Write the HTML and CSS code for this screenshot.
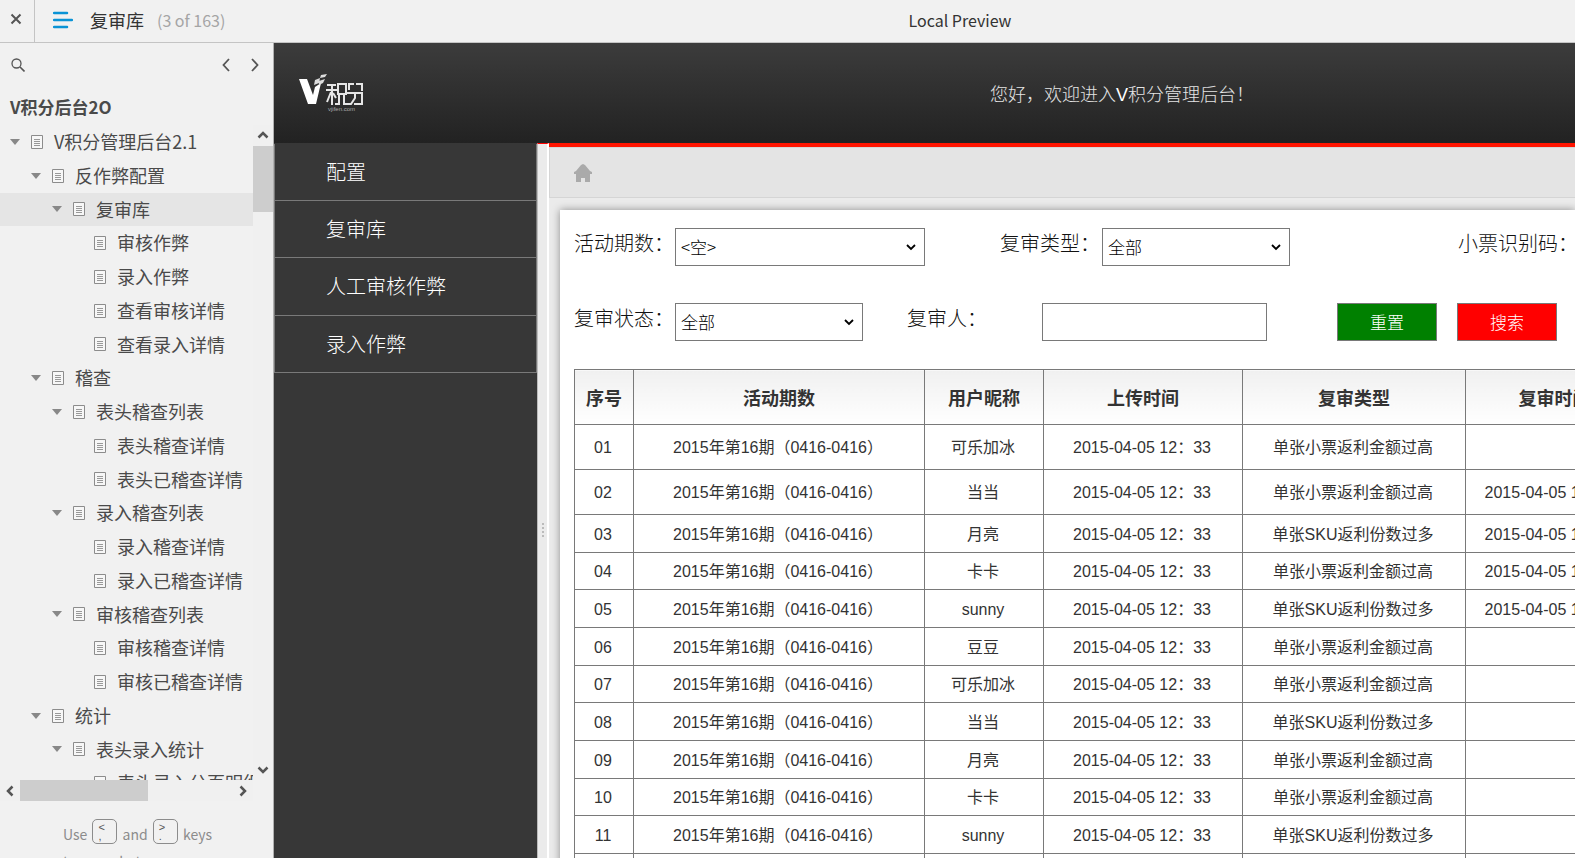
FILE: index.html
```
<!DOCTYPE html>
<html lang="zh-CN">
<head>
  <meta charset="utf-8">
  <title>复审库</title>
  <link rel="stylesheet" href="styles.css">
</head>
<body>

<svg class="symbols" aria-hidden="true">
  <symbol id="page" viewBox="0 0 12 14">
    <path d="M.5.5h11v13H.5z" fill="#f7f7f7" stroke="#8c8c8c"/>
    <path d="M3 4.500h6M3 6.500h6M3 8.500h6M3 10.500h6" stroke="#999"/>
  </symbol>
  <symbol id="chevron" viewBox="0 0 12 12">
    <path d="M1.500 8.500L6 4l4.500 4.500" fill="none" stroke="#555" stroke-width="2.500"/>
  </symbol>
</svg>

<header class="topbar">
  <button class="close" aria-label="close">
    <svg width="12" height="12" viewBox="0 0 12 12"><path d="M1.500 1.500l9 9M10.500 1.500l-9 9" stroke="#555" stroke-width="2"/></svg>
  </button>
  <svg class="menu" width="20" height="18" viewBox="0 0 20 18"><path d="M1 2h13M1 9h18M1 16h13" stroke="#0a93d5" stroke-width="2.500" stroke-linecap="round"/></svg>
  <span class="page-name">复审库</span>
  <span class="page-count">(3 of 163)</span>
  <span class="preview">Local Preview</span>
</header>

<div class="main">
  <aside class="sitemap">
    <div class="tools">
      <button aria-label="search"><svg width="14" height="14" viewBox="0 0 14 14"><circle cx="5.500" cy="5.500" r="4.500" fill="none" stroke="#555" stroke-width="1.300"/><path d="M9 9l4.500 4.500" stroke="#555" stroke-width="1.600"/></svg></button>
      <button class="prev" aria-label="previous"><svg width="8" height="14" viewBox="0 0 8 14"><path d="M7 1L1.500 7 7 13" fill="none" stroke="#555" stroke-width="1.800"/></svg></button>
      <button aria-label="next"><svg width="8" height="14" viewBox="0 0 8 14"><path d="M1 1l5.500 6L1 13" fill="none" stroke="#555" stroke-width="1.800"/></svg></button>
    </div>
    <h1>V积分后台2O</h1>

    <div class="tree-area">
      <ul class="tree">
        <li class="l1 open"><svg><use href="#page"/></svg><a href="#">V积分管理后台2.1</a></li>
        <li class="l2 open"><svg><use href="#page"/></svg><a href="#">反作弊配置</a></li>
        <li class="l3 open current"><svg><use href="#page"/></svg><a href="#">复审库</a></li>
        <li class="l4"><svg><use href="#page"/></svg><a href="#">审核作弊</a></li>
        <li class="l4"><svg><use href="#page"/></svg><a href="#">录入作弊</a></li>
        <li class="l4"><svg><use href="#page"/></svg><a href="#">查看审核详情</a></li>
        <li class="l4"><svg><use href="#page"/></svg><a href="#">查看录入详情</a></li>
        <li class="l2 open"><svg><use href="#page"/></svg><a href="#">稽查</a></li>
        <li class="l3 open"><svg><use href="#page"/></svg><a href="#">表头稽查列表</a></li>
        <li class="l4"><svg><use href="#page"/></svg><a href="#">表头稽查详情</a></li>
        <li class="l4"><svg><use href="#page"/></svg><a href="#">表头已稽查详情</a></li>
        <li class="l3 open"><svg><use href="#page"/></svg><a href="#">录入稽查列表</a></li>
        <li class="l4"><svg><use href="#page"/></svg><a href="#">录入稽查详情</a></li>
        <li class="l4"><svg><use href="#page"/></svg><a href="#">录入已稽查详情</a></li>
        <li class="l3 open"><svg><use href="#page"/></svg><a href="#">审核稽查列表</a></li>
        <li class="l4"><svg><use href="#page"/></svg><a href="#">审核稽查详情</a></li>
        <li class="l4"><svg><use href="#page"/></svg><a href="#">审核已稽查详情</a></li>
        <li class="l2 open"><svg><use href="#page"/></svg><a href="#">统计</a></li>
        <li class="l3 open"><svg><use href="#page"/></svg><a href="#">表头录入统计</a></li>
        <li class="l4"><svg><use href="#page"/></svg><a href="#">表头录入分页明细</a></li>
      </ul>
      <div class="vbar">
        <svg><use href="#chevron"/></svg>
        <div class="thumb"></div>
        <svg class="down"><use href="#chevron"/></svg>
      </div>
      <div class="hbar">
        <svg class="left"><use href="#chevron"/></svg>
        <div class="thumb"></div>
        <svg class="right"><use href="#chevron"/></svg>
      </div>
    </div>

    <div class="hint">
      Use <kbd><span>&lt;</span><span>,</span></kbd> and <kbd><span>&gt;</span><span>.</span></kbd> keys<br>to move between pages
    </div>
  </aside>

  <section class="site">
    <div class="site-header">
      <svg class="logo" width="66" height="40" viewBox="0 0 66 40">
        <path d="M0 6h8l6 16 2-8 6-4-5 21h-8z" fill="#fff"/>
        <path d="M16 7l5-2-1 5-5 2zM22 2l6-1-2 3-5 1zM20 8l6-2-2 4-4 2z" fill="#ddd"/>
        <g fill="none" stroke="#e6e6e6" stroke-width="2">
          <path d="M28 12h9M33 12v20M27 17h11M32 19l-4 10M34 20l3 5M39 11h8v10h-8zM40 22v9h-4M45 22v9h4"/>
          <path d="M50 17v-6h5M57 11h6v7M48 20h15v11h-8M56 20v5l-4 6h-4"/>
        </g>
        <text x="29" y="38" class="logo-url">vjifen.com</text>
      </svg>
      <p class="welcome">您好，欢迎进入<b>V</b>积分管理后台！</p>
    </div>

    <div class="site-body">
      <nav class="nav">
        <a href="#">配置</a>
        <a href="#">复审库</a>
        <a href="#">人工审核作弊</a>
        <a href="#">录入作弊</a>
      </nav>
      <div class="splitter"><i></i><i></i><i></i><i></i></div>

      <div class="content">
        <div class="crumb">
          <svg width="18" height="18" viewBox="0 0 18 18"><path d="M9 0l2 1 5 6 2 1v2h-2v8h-5v-4H7v4H2v-8H0V8l2-1 5-6z" fill="#aaa"/></svg>
        </div>
        <div class="card">
          <form class="filters">
            <div class="row">
              <label class="w100" for="period">活动期数：</label>
              <select id="period" class="wide"><option>&lt;空&gt;</option></select>
              <label class="type" for="type">复审类型：</label>
              <select id="type"><option>全部</option></select>
              <label class="code" for="code">小票识别码：</label>
              <input id="code" type="text">
            </div>
            <div class="row">
              <label class="w100" for="state">复审状态：</label>
              <select id="state"><option>全部</option></select>
              <label class="person" for="person">复审人：</label>
              <input id="person" type="text">
              <button type="button" class="reset">重置</button>
              <button type="button" class="search">搜索</button>
            </div>
          </form>

          <table>
            <colgroup>
              <col class="c-no"><col class="c-period"><col class="c-user"><col class="c-upload"><col class="c-type"><col class="c-time">
            </colgroup>
            <thead>
              <tr><th>序号</th><th>活动期数</th><th>用户昵称</th><th>上传时间</th><th>复审类型</th><th>复审时间</th></tr>
            </thead>
            <tbody>
              <tr class="tall"><td>01</td><td>2015年第16期（0416-0416）</td><td>可乐加冰</td><td>2015-04-05 12：33</td><td>单张小票返利金额过高</td><td></td></tr>
              <tr class="tall"><td>02</td><td>2015年第16期（0416-0416）</td><td>当当</td><td>2015-04-05 12：33</td><td>单张小票返利金额过高</td><td>2015-04-05 12：33</td></tr>
              <tr><td>03</td><td>2015年第16期（0416-0416）</td><td>月亮</td><td>2015-04-05 12：33</td><td>单张SKU返利份数过多</td><td>2015-04-05 12：33</td></tr>
              <tr><td>04</td><td>2015年第16期（0416-0416）</td><td>卡卡</td><td>2015-04-05 12：33</td><td>单张小票返利金额过高</td><td>2015-04-05 12：33</td></tr>
              <tr><td>05</td><td>2015年第16期（0416-0416）</td><td>sunny</td><td>2015-04-05 12：33</td><td>单张SKU返利份数过多</td><td>2015-04-05 12：33</td></tr>
              <tr><td>06</td><td>2015年第16期（0416-0416）</td><td>豆豆</td><td>2015-04-05 12：33</td><td>单张小票返利金额过高</td><td></td></tr>
              <tr><td>07</td><td>2015年第16期（0416-0416）</td><td>可乐加冰</td><td>2015-04-05 12：33</td><td>单张小票返利金额过高</td><td></td></tr>
              <tr><td>08</td><td>2015年第16期（0416-0416）</td><td>当当</td><td>2015-04-05 12：33</td><td>单张SKU返利份数过多</td><td></td></tr>
              <tr><td>09</td><td>2015年第16期（0416-0416）</td><td>月亮</td><td>2015-04-05 12：33</td><td>单张小票返利金额过高</td><td></td></tr>
              <tr><td>10</td><td>2015年第16期（0416-0416）</td><td>卡卡</td><td>2015-04-05 12：33</td><td>单张小票返利金额过高</td><td></td></tr>
              <tr><td>11</td><td>2015年第16期（0416-0416）</td><td>sunny</td><td>2015-04-05 12：33</td><td>单张SKU返利份数过多</td><td></td></tr>
              <tr><td></td><td></td><td></td><td></td><td></td><td></td></tr>
            </tbody>
          </table>
        </div>
      </div>
    </div>
  </section>
</div>

</body>
</html>
```
FILE: styles.css
```
* {
    box-sizing: border-box;
}

body {
    margin: 0;
    height: 100vh;
    display: flex;
    flex-direction: column;
    overflow: hidden;
    background: #f1f1f1;
    font-family: "Noto Sans CJK SC", sans-serif;
    color: #333;
}

a {
    color: inherit;
    text-decoration: none;
}

button {
    padding: 0;
    border: 0;
    background: none;
}

.symbols {
    display: none;
}

/* top bar */
.topbar {
    position: relative;
    flex: none;
    display: flex;
    align-items: center;
    height: 43px;
    padding-bottom: 2px;
    border-bottom: 1px solid #c4c4c4;
    font-size: 18px;
    line-height: 40px;
}

.close {
    width: 35px;
    height: 42px;
    margin-bottom: -2px;
    border-right: 1px solid #c4c4c4;
}

.close svg {
    display: block;
    margin: -4px auto 0 10px;
}

.menu {
    margin: -1px 17px 0 18px;
}

.page-count {
    margin-left: 13px;
    font-size: 16px;
    color: #a5a5a5;
}

.preview {
    position: absolute;
    left: 345px;
    right: 0;
    text-align: center;
    font-size: 16px;
}

.main {
    flex: 1;
    display: flex;
    min-height: 0;
}

/* page tree */
.sitemap {
    flex: none;
    width: 274px;
    display: flex;
    flex-direction: column;
    border-right: 1px solid #b0b0b0;
    color: #4a4a4a;
}

.tools {
    display: flex;
    align-items: center;
    gap: 21px;
    height: 44px;
    padding: 0 14px 0 11px;
}

.tools svg {
    display: block;
}

.prev {
    margin-left: auto;
}

.sitemap h1 {
    margin: 0;
    padding: 5px 10px 0;
    height: 38px;
    font-size: 17px;
    line-height: 30px;
}

.tree-area {
    flex: 1;
    min-height: 0;
    display: grid;
    grid-template: minmax(0, 1fr) 21px / 1fr 20px;
}

.tree {
    margin: 0;
    padding: 0;
    list-style: none;
    overflow: hidden;
    font-size: 18px;
    line-height: 1.875;
}

.tree li {
    display: flex;
    align-items: center;
    white-space: nowrap;
}

.tree svg {
    flex: none;
    width: 12px;
    height: 14px;
    margin-right: 11px;
}

.l1 { padding-left: 31px; }
.l2 { padding-left: 52px; }
.l3 { padding-left: 73px; }
.l4 { padding-left: 94px; }

.open::before {
    content: "";
    margin: 0 11px 0 -21px;
    border: 5px solid transparent;
    border-top: 6px solid #888;
    border-bottom: 0;
}

.current {
    background: #e5e5e5;
}

.vbar {
    display: flex;
    flex-direction: column;
    align-items: center;
    padding: 4px 0;
    background: #f0f0f0;
}

.vbar svg,
.hbar svg {
    flex: none;
    width: 12px;
    height: 12px;
}

.vbar .thumb {
    width: 20px;
    height: 66px;
    margin-top: 5px;
    background: #cdcdcd;
}

.vbar .down {
    margin-top: auto;
    transform: rotate(180deg);
}

.hbar {
    display: flex;
    align-items: center;
    padding: 0 4px;
    background: #f0f0f0;
}

.hbar .thumb {
    width: 128px;
    height: 21px;
    margin-left: 4px;
    background: #cdcdcd;
}

.hbar .left {
    transform: rotate(-90deg);
}

.hbar .right {
    margin-left: auto;
    transform: rotate(90deg);
}

.hint {
    height: 57px;
    padding: 18px 0 0 63px;
    overflow: hidden;
    white-space: nowrap;
    font-size: 14px;
    line-height: 27px;
    color: #8c8c8c;
}

kbd {
    display: inline-block;
    width: 25px;
    height: 25px;
    margin: 0 2px;
    padding: 3px 0 0 5px;
    overflow: hidden;
    border: 1px solid #8c8c8c;
    border-radius: 5px;
    vertical-align: -4px;
    font: 11px/9px "Liberation Sans", sans-serif;
    color: #555;
}

kbd span {
    display: block;
    height: 9px;
}

/* site inside the preview */
.site {
    flex: 1;
    min-width: 0;
    display: flex;
    flex-direction: column;
    background: #373737;
}

.site-header {
    flex: none;
    display: flex;
    align-items: center;
    height: 100px;
    padding-left: 25px;
    background: linear-gradient(#3c3c3c, #222);
}

.logo-url {
    font: 6px "Liberation Sans", sans-serif;
    fill: #aaa;
}

.welcome {
    margin: 0 0 0 625px;
    font-size: 18px;
    font-weight: 300;
    white-space: nowrap;
    color: #e4e4e4;
}

.welcome b {
    font-family: "Liberation Sans", sans-serif;
    font-weight: normal;
    color: #fff;
}

.site-body {
    flex: 1;
    display: flex;
    min-height: 0;
}

.nav {
    flex: none;
    width: 263px;
    padding-top: 1px;
}

.nav a {
    display: block;
    height: 57px;
    padding-left: 51px;
    border: 1px solid #797979;
    border-top: 0;
    font-size: 20px;
    font-weight: 300;
    line-height: 55px;
    color: #fff;
}

.nav a:nth-child(3) {
    height: 58px;
}

.splitter {
    flex: none;
    width: 12px;
    padding-top: 58px;
    display: flex;
    flex-direction: column;
    align-items: center;
    justify-content: center;
    gap: 2px;
    border-top: 1px solid #f00;
    border-left: 1px solid #bbb;
    border-right: 2px solid #fff;
    background: #ebebeb;
}

.splitter i {
    width: 2px;
    height: 2px;
    background: #bbb;
}

.content {
    flex: 1;
    min-width: 0;
    display: flex;
    flex-direction: column;
    overflow: hidden;
    border-top: 4px solid #ff1400;
    background: #ebebeb;
}

.crumb {
    flex: none;
    display: flex;
    align-items: center;
    height: 51px;
    padding-left: 24px;
    border: 1px solid #d5d5d5;
    border-right: 0;
    background: #e4e4e4;
}

.card {
    flex: 1;
    margin: 12px 0 0 11px;
    padding: 18px 0 0 14px;
    background: #fff;
    box-shadow: 0 0 8px rgba(0, 0, 0, 0.4);
}

.row {
    display: flex;
    height: 38px;
    margin-bottom: 37px;
}

.row:last-child {
    margin-bottom: 28px;
}

.filters label {
    flex: none;
    font-size: 20px;
    font-weight: 300;
    line-height: 30px;
    white-space: nowrap;
    color: #111;
}

.filters .w100 { width: 101px; }
.filters .type { width: 102px; margin-left: 75px; }
.filters .code { width: 135px; margin-left: 168px; }
.filters .person { width: 135px; margin-left: 44px; }

.filters select,
.filters input {
    flex: none;
    width: 188px;
    height: 38px;
    padding: 0 5px 2px;
    border: 1px solid #797979;
    border-radius: 0;
    background: #fff;
    font: 300 17px "Noto Sans CJK SC", sans-serif;
    color: #000;
}

.filters select {
    appearance: none;
    background: #fff url("data:image/svg+xml,%3Csvg xmlns='http://www.w3.org/2000/svg' width='10' height='7'%3E%3Cpath d='M1 1l4 4 4-4' fill='none' stroke='%23000' stroke-width='1.800'/%3E%3C/svg%3E") no-repeat right 8px center;
}

.filters .wide {
    width: 250px;
}

.filters input {
    width: 225px;
}

.filters button {
    flex: none;
    width: 100px;
    height: 38px;
    padding-bottom: 2px;
    border: 1px solid #797979;
    font: 300 17px "Noto Sans CJK SC", sans-serif;
    color: #fff;
}

.filters .reset {
    margin-left: 70px;
    background: #008000;
}

.filters .search {
    margin-left: 20px;
    background: #f00;
}

table {
    width: 1069px;
    table-layout: fixed;
    border-collapse: collapse;
    font-family: "Liberation Sans", "Noto Sans CJK SC", sans-serif;
    font-size: 16px;
    line-height: 20px;
}

.c-no { width: 59px; }
.c-period { width: 291px; }
.c-user { width: 119px; }
.c-upload { width: 199px; }
.c-type { width: 223px; }
.c-time { width: 178px; }

th,
td {
    padding: 2px 2px 0 0;
    border: 1px solid #797979;
    text-align: center;
    white-space: nowrap;
}

th {
    height: 55px;
    padding: 3px 0 0;
    background: linear-gradient(#f0f0f0, #fff);
    font-size: 18px;
}

td {
    height: 38px;
}

tr:nth-child(3n+1) td {
    height: 37px;
}

.tall td,
.tall:nth-child(3n+1) td {
    height: 45px;
}
```
